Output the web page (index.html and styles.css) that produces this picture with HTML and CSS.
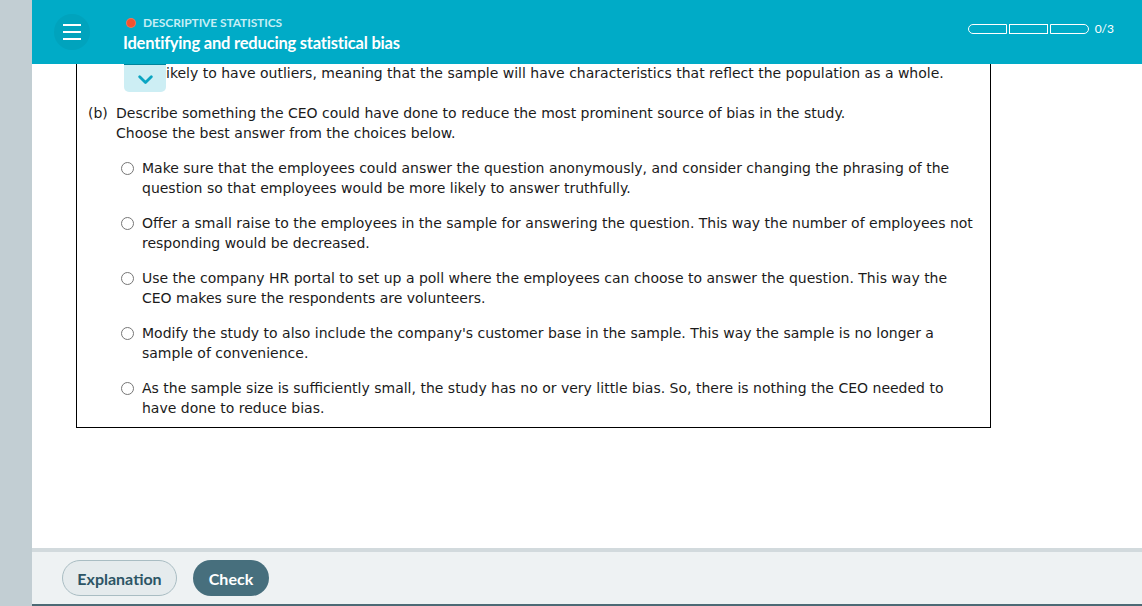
FILE: index.html
```html
<!DOCTYPE html>
<html>
<head>
<meta charset="utf-8">
<link rel="stylesheet" href="styles.css">
</head>
<body>
<div class="app">
  <div class="rail"></div>
  <div class="main">
    <header class="header">
      <div class="menu-btn">
        <svg width="18" height="16" viewBox="0 0 18 16"><g stroke="#fff" stroke-width="2"><line x1="0" y1="1" x2="18" y2="1"/><line x1="0" y1="8" x2="18" y2="8"/><line x1="0" y1="15" x2="18" y2="15"/></g></svg>
      </div>
      <div class="titles">
        <div class="topic"><span class="dot"></span>DESCRIPTIVE STATISTICS</div>
        <div class="title">Identifying and reducing statistical bias</div>
      </div>
      <div class="progress">
        <div class="segs"><span class="seg first"></span><span class="seg"></span><span class="seg last"></span></div>
        <span class="count">0/3</span>
      </div>
    </header>
    <div class="content">
      <div class="toggle">
        <svg width="15" height="10" viewBox="0 0 15 10"><path d="M1.7 1.7 L7.5 7.5 L13.3 1.7" fill="none" stroke="#0ba5c2" stroke-width="2.8" stroke-linecap="round" stroke-linejoin="round"/></svg>
      </div>
      <div class="box">
        <p class="cut">ikely to have outliers, meaning that the sample will have characteristics that reflect the population as a whole.</p>
        <div class="part">
          <span class="label">(b)</span>
          <div class="part-body">
            <p>Describe something the CEO could have done to reduce the most prominent source of bias in the study.</p>
            <p>Choose the best answer from the choices below.</p>
            <ul class="options">
              <li><span class="radio"></span><span class="opt">Make sure that the employees could answer the question anonymously, and consider changing the phrasing of the question so that employees would be more likely to answer truthfully.</span></li>
              <li><span class="radio"></span><span class="opt">Offer a small raise to the employees in the sample for answering the question. This way the number of employees not responding would be decreased.</span></li>
              <li><span class="radio"></span><span class="opt">Use the company HR portal to set up a poll where the employees can choose to answer the question. This way the CEO makes sure the respondents are volunteers.</span></li>
              <li><span class="radio"></span><span class="opt">Modify the study to also include the company's customer base in the sample. This way the sample is no longer a sample of convenience.</span></li>
              <li><span class="radio"></span><span class="opt">As the sample size is sufficiently small, the study has no or very little bias. So, there is nothing the CEO needed to have done to reduce bias.</span></li>
            </ul>
          </div>
        </div>
      </div>
    </div>
    <footer class="footer">
      <button class="btn btn-expl">Explanation</button>
      <button class="btn btn-check">Check</button>
    </footer>
  </div>
</div>
</body>
</html>
```

FILE: styles.css
```css
* { box-sizing: border-box; }
html, body { margin: 0; padding: 0; height: 100%; }
body { font-family: "DejaVu Sans", Verdana, sans-serif; overflow: hidden; background: #fff; }
.app { display: flex; height: 606px; }
.rail { width: 32px; background: #c2ced3; flex: none; }
.main { flex: 1; display: flex; flex-direction: column; min-width: 0; }

.header { height: 64px; background: #00abc7; display: flex; align-items: center; flex: none; position: relative; z-index: 2; }
.menu-btn { width: 36px; height: 36px; border-radius: 50%; background: #00a3bd; margin-left: 22px; display: flex; align-items: center; justify-content: center; }
.titles { margin-left: 33px; font-family: Lato, "Open Sans", sans-serif; font-weight: 700; color: #fff; padding-top: 4px; }
.topic { font-size: 12px; color: #c6eef5; display: flex; align-items: center; letter-spacing: -0.1px; height: 14px; margin-left: 3px; }
.dot { width: 10px; height: 10px; border-radius: 50%; background: #f2522e; border: 1px solid #fff3; margin-right: 7px; }
.title { font-size: 16.5px; margin-top: 3px; letter-spacing: -0.2px; }
.progress { margin-left: auto; margin-right: 28px; display: flex; align-items: center; margin-top: -7px; }
.segs { display: flex; gap: 2px; }
.seg { width: 39px; height: 10px; border: 1.5px solid #fff; }
.seg.first { border-radius: 5px 0 0 5px; }
.seg.last { border-radius: 0 5px 5px 0; }
.count { font-family: Lato, sans-serif; font-size: 12px; color: #fff; margin-left: 6px; }

.content { flex: 1; position: relative; overflow: hidden; }
.toggle { position: absolute; left: 92px; top: -2px; width: 42px; height: 30px; background: #cdeef4; border-top: 3px solid #00859c; border-radius: 0 0 5px 5px; display: flex; align-items: center; justify-content: center; padding-top: 3px; z-index: 1; }
.box { margin-left: 44px; width: 915px; border: 1px solid #000; border-top: none; padding: 0 12px 9px 11px; color: #1b1b1b; font-size: 14px; line-height: 20px; }
.box p { margin: 0; }
.cut { padding-left: 78px; margin-top: -1px !important; }
.part { display: flex; margin-top: 20px; }
.label { width: 28px; flex: none; }
.options { list-style: none; margin: 15px 0 0 0; padding: 0 0 0 5px; display: flex; flex-direction: column; gap: 15px; }
.options li { display: flex; align-items: flex-start; }
.radio { width: 13px; height: 13px; border: 1px solid #767676; border-radius: 50%; flex: none; margin-top: 4px; margin-right: 8px; background: #fff; }
.opt { flex: 1; }

.footer { height: 58px; flex: none; background: #eef2f3; border-top: 4px solid #d2dadd; border-bottom: 2px solid #4c6a75; display: flex; align-items: center; padding-left: 30px; gap: 16px; padding-top: 0; }
.btn { font-family: Lato, sans-serif; font-weight: 700; font-size: 16px; height: 36px; border-radius: 18px; cursor: pointer; }
.btn-expl { width: 115px; background: #e5ebed; border: 1px solid #a9bdc3; color: #2c5565; }
.btn-check { width: 76px; background: #476f7d; border: none; color: #fff; }
```
